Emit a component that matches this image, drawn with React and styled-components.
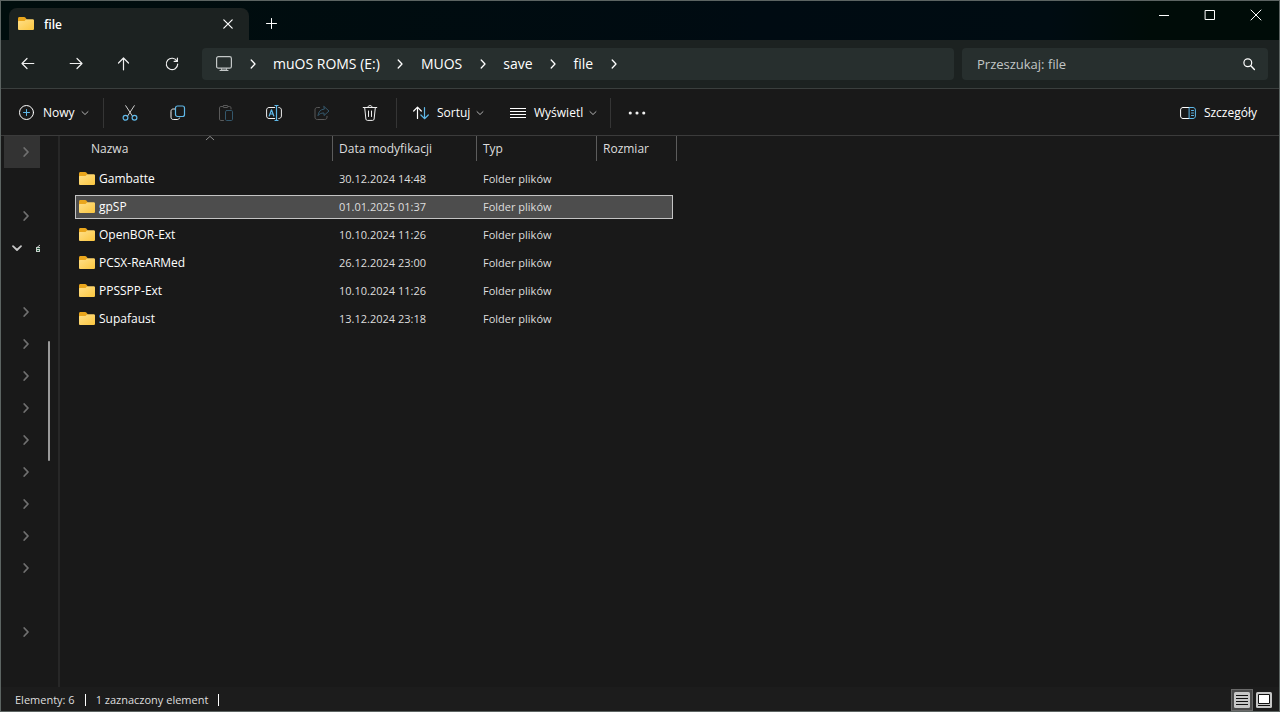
import { useState } from "react";
import styled, { createGlobalStyle } from "styled-components";

const folders = [
    { name: "Gambatte", date: "30.12.2024 14:48" },
    { name: "gpSP", date: "01.01.2025 01:37" },
    { name: "OpenBOR-Ext", date: "10.10.2024 11:26" },
    { name: "PCSX-ReARMed", date: "26.12.2024 23:00" },
    { name: "PPSSPP-Ext", date: "10.10.2024 11:26" },
    { name: "Supafaust", date: "13.12.2024 23:18" },
];

const path = ["muOS ROMS (E:)", "MUOS", "save", "file"];

// one entry for each line of the navigation tree
const tree = [
    "selected", "empty", "closed", "open", "empty",
    "closed", "closed", "closed", "closed", "closed", "closed", "closed", "closed", "closed",
    "empty", "closed",
];

const BLUE = "#5fb8e8";

function Icon({ size = 16, children, ...rest }) {
    return (
        <svg width={size} height={size} viewBox="0 0 16 16" fill="none" stroke="currentColor"
            strokeLinecap="round" strokeLinejoin="round" aria-hidden="true" {...rest}>
            {children}
        </svg>
    );
}

function FolderIcon() {
    return (
        <Icon stroke="none">
            <path d="M0 2.6C0 1.700.6 1 1.400 1h4.800c.4 0 .8.2 1.100.5L8.500 3v5H0z" fill="#eaa61c" />
            <path d="M0 6c0-.7.4-1 1-1h4.900c.5 0 .8-.1 1.100-.5l1-.9c.3-.3.6-.4 1-.4h5.700c.8 0 1.300.6 1.300 1.300v8.200c0 .8-.6 1.300-1.300 1.300H1.300c-.8 0-1.300-.5-1.300-1.300z" fill="url(#folder)" />
            <defs>
                <linearGradient id="folder" x1="0" y1="0" x2="1" y2="1">
                    <stop offset="0" stopColor="#ffe08a" />
                    <stop offset="1" stopColor="#fbc63f" />
                </linearGradient>
            </defs>
        </Icon>
    );
}

function Chevron({ down, size = 16, width = 1.3 }) {
    return (
        <Icon size={size} strokeWidth={width}>
            <path d={down ? "M4 6.2 8 10l4-3.8" : "M6.2 4 10 8l-3.8 4"} />
        </Icon>
    );
}

export default function App() {
    const [selected, setSelected] = useState("gpSP");

    return (
        <>
            <GlobalStyle />
            <Window>
                <TitleBar>
                    <Tab>
                        <FolderIcon />
                        <TabName>file</TabName>
                        <TabClose aria-label="Zamknij kartę">
                            <Icon strokeWidth="1.2"><path d="m3.8 3.8 8.4 8.4m0-8.4-8.4 8.4" /></Icon>
                        </TabClose>
                    </Tab>
                    <NewTab aria-label="Nowa karta">
                        <Icon><path d="M7.5 2.5v10M2.5 7.5h10" /></Icon>
                    </NewTab>
                    <WindowControls>
                        <WindowButton aria-label="Minimalizuj">
                            <Icon><path d="M3 8.5h10" strokeLinecap="butt" /></Icon>
                        </WindowButton>
                        <WindowButton aria-label="Maksymalizuj">
                            <Icon><rect x="3.5" y="3.5" width="9" height="9" /></Icon>
                        </WindowButton>
                        <WindowButton aria-label="Zamknij">
                            <Icon><path d="m3 3 10 10m0-10L3 13" /></Icon>
                        </WindowButton>
                    </WindowControls>
                </TitleBar>

                <AddressBar>
                    <NavButtons>
                        <IconButton aria-label="Wstecz">
                            <Icon strokeWidth="1.2"><path d="M13.800 7.500H2.300M7 2.500l-5 5 5 5" /></Icon>
                        </IconButton>
                        <IconButton aria-label="Dalej">
                            <Icon strokeWidth="1.2"><path d="M2.200 7.500h11.500M9 2.500l5 5-5 5" /></Icon>
                        </IconButton>
                        <IconButton aria-label="W górę">
                            <Icon strokeWidth="1.2"><path d="M7.500 13.800V2.300M2.500 7l5-5 5 5" /></Icon>
                        </IconButton>
                        <IconButton aria-label="Odśwież">
                            <Icon strokeWidth="1.2"><path d="M13 5.200A5.700 5.700 0 1 0 13.700 8M13.400 2.200v3.200h-3.200" /></Icon>
                        </IconButton>
                    </NavButtons>
                    <Breadcrumbs aria-label="Ścieżka">
                        <Icon color="#c4c8c8">
                            <rect x=".6" y=".6" width="14.8" height="11.6" rx="1.8" strokeWidth="1.2" />
                            <path d="M5.5 12.5v2M10.5 12.5v2M4 14.500h8" strokeWidth="1.200" />
                            <path d="M6 13.300h4" stroke="#8b9090" />
                        </Icon>
                        <CrumbArrow><Chevron /></CrumbArrow>
                        {path.map(name => (
                            <Crumb key={name}>
                                <CrumbLink href="#">{name}</CrumbLink>
                                <CrumbArrow><Chevron /></CrumbArrow>
                            </Crumb>
                        ))}
                    </Breadcrumbs>
                    <Search>
                        <SearchInput type="text" aria-label="Przeszukaj: file" placeholder="Przeszukaj: file" />
                        <Icon>
                            <circle cx="6.8" cy="6.8" r="3.9" strokeWidth="1.2" />
                            <path d="m9.8 9.8 3.6 3.6" strokeWidth="1.4" />
                        </Icon>
                    </Search>
                </AddressBar>

                <Toolbar>
                    <MenuButton $left={18} $width={100}>
                        <Icon>
                            <circle cx="7.500" cy="7.500" r="7" />
                            <path d="M7.500 4.500v6M4.500 7.500h6" stroke={BLUE} />
                        </Icon>
                        Nowy
                        <Chevron down size={12} />
                    </MenuButton>
                    <Separator />
                    <IconButton aria-label="Wytnij">
                        <Icon>
                            <path d="m3.7.7 6.8 10.500M12.300.7 5.500 11.200" stroke="#d0d0d0" />
                            <circle cx="3.5" cy="12.8" r="2.4" stroke={BLUE} strokeWidth="1.200" />
                            <circle cx="12.5" cy="12.8" r="2.4" stroke={BLUE} strokeWidth="1.200" />
                        </Icon>
                    </IconButton>
                    <IconButton aria-label="Kopiuj">
                        <Icon>
                            <path d="M4.600 4H3.300C1.900 4 1 4.900 1 6.300v5.900c0 1.400.9 2.300 2.300 2.300h3.900c1.200 0 2-.6 2.300-1.500" />
                            <rect x="5.500" y="1" width="9" height="10.500" rx="2" stroke={BLUE} strokeWidth="1.200" />
                        </Icon>
                    </IconButton>
                    <IconButton aria-label="Wklej" disabled>
                        <Icon>
                            <path d="M5 1.500H2.800c-.8 0-1.300.5-1.300 1.300v11.400c0 .8.5 1.300 1.300 1.300h2.700M10 1.500h1.700c.8 0 1.300.5 1.300 1.300V4" />
                            <rect x="5" y=".5" width="5" height="2" rx="1" />
                            <rect x="7.500" y="5.500" width="7" height="10" rx="1.200" stroke="#34576b" />
                        </Icon>
                    </IconButton>
                    <IconButton aria-label="Zmień nazwę">
                        <Icon>
                            <path d="M8.700 2.500H3C1.700 2.500.6 3.500.6 4.900v6.200c0 1.400 1.100 2.400 2.400 2.400h5.700M12.800 2.500c1.600 0 2.600 1 2.600 2.400v6.200c0 1.400-1 2.400-2.600 2.400" />
                            <path d="m3.200 11 2.300-6.200L7.800 11M4 9h3M9 .5h3M9 15.500h3M10.500.6v14.800" stroke={BLUE} strokeWidth="1.200" />
                        </Icon>
                    </IconButton>
                    <IconButton aria-label="Udostępnij" disabled>
                        <Icon>
                            <path d="M5.500 2.500H3.300C1.900 2.500 1 3.400 1 4.800v7.400c0 1.400.9 2.300 2.300 2.300h7.400c1.400 0 2.300-.9 2.300-2.300v-.9" />
                            <path d="M10 1.500 15 6l-5 4.500V8c-3 0-4.700.8-6 2.700C4.300 7 6.300 4.400 10 4.100z" stroke="#34576b" />
                        </Icon>
                    </IconButton>
                    <IconButton aria-label="Usuń">
                        <Icon>
                            <path d="M1.200 2.500h13.600M5.800 2.500C5.800 1.300 6.700.6 8 .6s2.200.7 2.200 1.900M2.700 2.800l1.200 11.300c.1.800.7 1.300 1.500 1.300h5.200c.8 0 1.400-.5 1.500-1.300l1.200-11.300M6.500 6v5.500M9.500 6v5.500" />
                        </Icon>
                    </IconButton>
                    <Separator />
                    <MenuButton $left={14} $width={94}>
                        <Icon strokeWidth="1.200">
                            <path d="M4.500 13.500v-11M.7 6l3.800-3.800L8.300 6" />
                            <path d="M11.500 2.500v11M7.900 10l3.600 3.700 3.800-3.700" stroke={BLUE} />
                        </Icon>
                        Sortuj
                        <Chevron down size={12} />
                    </MenuButton>
                    <MenuButton $left={17} $width={115}>
                        <Icon strokeLinecap="butt"><path d="M0 3.500h16M0 6.500h16M0 9.500h16M0 12.500h16" /></Icon>
                        Wyświetl
                        <Chevron down size={12} />
                    </MenuButton>
                    <Separator />
                    <IconButton aria-label="Więcej">
                        <Icon size={18} stroke="none" fill="currentColor">
                            <circle cx="2" cy="8" r="1.400" />
                            <circle cx="8" cy="8" r="1.400" />
                            <circle cx="14" cy="8" r="1.400" />
                        </Icon>
                    </IconButton>
                    <DetailsButton>
                        <Icon>
                            <path d="M9.500 2.500H3C1.600 2.500.6 3.500.6 4.900v6.200c0 1.400 1 2.400 2.400 2.400h6.500" />
                            <path d="M9.500 2.500H13c1.400 0 2.400 1 2.400 2.400v6.200c0 1.400-1 2.400-2.400 2.400H9.500zM11.500 5.500h2M11.500 8h2M11.500 10.500h2" stroke={BLUE} />
                        </Icon>
                        Szczegóły
                    </DetailsButton>
                </Toolbar>

                <Content>
                    <TreePane>
                        {tree.map((state, i) => (
                            <TreeItem key={i} $selected={state === "selected"}>
                                {state !== "empty" && (
                                    <TreeToggle aria-label="Rozwiń" $open={state === "open"}>
                                        <Chevron down={state === "open"} width={1.8} />
                                    </TreeToggle>
                                )}
                                {state === "open" && (
                                    <svg width="4" height="8" viewBox="0 0 4 8" aria-hidden="true">
                                        <path d="M1 3.500 4 1" stroke="#d0d0d0" />
                                        <path d="M0 3h4v5H0z" fill="#c8d0cb" />
                                        <path d="M1 4h3v1H1zM1 6h2v1H1z" fill="#24563c" />
                                    </svg>
                                )}
                            </TreeItem>
                        ))}
                        <TreeScroll />
                    </TreePane>
                    <FileTable>
                        <thead>
                            <HeaderRow>
                                <HeaderCell $first>
                                    Nazwa
                                    <SortMark><Icon size={12}><path d="m3 9 5-4.500L13 9" /></Icon></SortMark>
                                </HeaderCell>
                                <HeaderCell>Data modyfikacji</HeaderCell>
                                <HeaderCell>Typ</HeaderCell>
                                <HeaderCell>Rozmiar</HeaderCell>
                            </HeaderRow>
                        </thead>
                        <tbody>
                            {folders.map(folder => (
                                <FileRow
                                    key={folder.name}
                                    $selected={folder.name === selected}
                                    onClick={() => setSelected(folder.name)}
                                >
                                    <NameCell><FolderIcon />{folder.name}</NameCell>
                                    <FileCell>{folder.date}</FileCell>
                                    <FileCell>Folder plików</FileCell>
                                    <FileCell />
                                </FileRow>
                            ))}
                        </tbody>
                    </FileTable>
                </Content>

                <StatusBar>
                    <StatusText>Elementy: 6</StatusText>
                    <StatusText>1 zaznaczony element</StatusText>
                    <ViewButtons>
                        <ViewButton $active aria-label="Szczegóły">
                            <Icon strokeLinecap="butt">
                                <rect width="16" height="16" rx="1.500" fill="#c6c6c6" stroke="none" />
                                <path d="M2 3.500h12M2 6.500h12M2 9.500h12M2 12.500h12" stroke="#111" />
                            </Icon>
                        </ViewButton>
                        <ViewButton aria-label="Duże ikony">
                            <Icon strokeLinecap="butt">
                                <rect width="16" height="16" rx="1.500" fill="#c6c6c6" stroke="none" />
                                <rect x="2.500" y="2.500" width="11" height="9" fill="#fff" stroke="#111" />
                                <path d="M2 13.500h12" stroke="#111" />
                            </Icon>
                        </ViewButton>
                    </ViewButtons>
                </StatusBar>
            </Window>
        </>
    );
}

const GlobalStyle = createGlobalStyle`
    * {
        box-sizing: border-box;
    }
    body {
        margin: 0;
        background: #191919;
        color: #ffffff;
        font-family: "Open Sans", sans-serif;
        font-size: 12px;
        line-height: 16px;
    }
    button {
        display: flex;
        align-items: center;
        justify-content: center;
        padding: 0;
        border: 0;
        background: none;
        color: inherit;
        font: inherit;
    }
    svg {
        display: block;
        flex-shrink: 0;
    }
`;

const Window = styled.div`
    min-height: 100vh;
    display: flex;
    flex-direction: column;
    border: 1px solid #5c6462;
`;

const TitleBar = styled.header`
    display: flex;
    height: 39px;
    padding-left: 8px;
    background: linear-gradient(90deg, #000d0d, #000b12 60%, #000c12 82%, #000c08 90%);
`;

const Tab = styled.div`
    display: flex;
    align-items: center;
    align-self: flex-end;
    width: 240px;
    height: 32px;
    padding: 0 13px 0 9px;
    border-radius: 8px 8px 0 0;
    background: #1c2221;
`;

const TabName = styled.span`
    flex: 1;
    margin-left: 10px;
    padding-top: 2px;
    font-weight: 600;
`;

const TabClose = styled.button`
    width: 16px;
    height: 24px;
`;

const NewTab = styled.button`
    width: 46px;
    height: 32px;
    align-self: flex-end;
`;

const WindowControls = styled.div`
    display: flex;
    margin-left: auto;
`;

const WindowButton = styled.button`
    width: 46px;
    height: 28px;
`;

const AddressBar = styled.div`
    display: flex;
    align-items: center;
    height: 49px;
    padding: 0 11px 0 3px;
    border-bottom: 1px solid #3a3f3e;
    background: #1c2221;
`;

const NavButtons = styled.div`
    display: flex;
`;

const IconButton = styled.button`
    width: 48px;
    height: 32px;
    color: ${props => props.disabled ? "#5a5a5a" : "#f0f0f0"};
`;

const Breadcrumbs = styled.nav`
    display: flex;
    align-items: center;
    flex: 1;
    height: 32px;
    margin: 0 8px 0 6px;
    padding-left: 14px;
    border-radius: 4px;
    background: #272f2e;
    font-size: 14px;
    line-height: 20px;
`;

const Crumb = styled.span`
    display: flex;
    align-items: center;
`;

const CrumbLink = styled.a`
    color: inherit;
    text-decoration: none;
`;

const CrumbArrow = styled.span`
    display: flex;
    justify-content: center;
    width: 41px;
`;

const Search = styled.div`
    display: flex;
    align-items: center;
    width: 306px;
    height: 32px;
    padding: 0 11px 0 15px;
    border-radius: 4px;
    background: #272f2e;
`;

const SearchInput = styled.input`
    flex: 1;
    min-width: 0;
    padding: 0;
    border: 0;
    outline: 0;
    background: none;
    color: #ffffff;
    font: inherit;
    font-size: 13px;
    line-height: 20px;
    &::placeholder {
        color: #c2c6c6;
        opacity: 1;
    }
`;

const Toolbar = styled.div`
    display: flex;
    align-items: center;
    height: 47px;
    padding-top: 2px;
    border-bottom: 1px solid #3b3b3b;
`;

const Separator = styled.span`
    width: 1px;
    height: 30px;
    margin: 0 2px;
    background: #353535;
`;

const MenuButton = styled.button`
    justify-content: flex-start;
    gap: 8px;
    width: ${props => props.$width}px;
    height: 32px;
    padding-left: ${props => props.$left}px;

    svg:last-child {
        margin-left: -4px;
        color: #b4b4b4;
    }
`;

const DetailsButton = styled.button`
    gap: 8px;
    height: 32px;
    margin-left: auto;
    padding-right: 22px;
`;

const Content = styled.main`
    display: flex;
    flex: 1;
`;

const TreePane = styled.aside`
    position: relative;
    width: 59px;
    padding-left: 3px;
    border-right: 2px solid #272727;
`;

const TreeItem = styled.div`
    display: flex;
    align-items: center;
    justify-content: flex-end;
    width: 36px;
    height: 32px;
    background: ${props => props.$selected ? "#333333" : "transparent"};
`;

const TreeToggle = styled.button`
    width: 16px;
    height: 32px;
    margin-right: ${props => props.$open ? 11 : 6}px;
    color: ${props => props.$open ? "#c8c8c8" : "#707070"};
`;

const TreeScroll = styled.div`
    position: absolute;
    top: 205px;
    right: 8px;
    width: 2px;
    height: 120px;
    border-radius: 1px;
    background: #9a9a9a;
`;

const FileTable = styled.table`
    display: block;
    margin-left: 15px;
    border-spacing: 0;

    thead, tbody {
        display: block;
    }
`;

const HeaderRow = styled.tr`
    display: grid;
    grid-template-columns: 258px 144px 120px 80px;
    height: 25px;
    margin-bottom: 6px;
`;

const HeaderCell = styled.th`
    position: relative;
    padding: 5px 0 0 ${props => props.$first ? 16 : 6}px;
    border-right: 1px solid #5c5c5c;
    color: #dedede;
    font-weight: 400;
    text-align: left;
`;

const SortMark = styled.span`
    position: absolute;
    top: -3px;
    left: 50%;
    color: #b0b0b0;
`;

const FileRow = styled.tr`
    display: grid;
    grid-template-columns: 258px 144px 120px 76px;
    align-items: center;
    height: 24px;
    margin: 0 4px 4px 0;
    outline: ${props => props.$selected ? "1px solid #c4c4c4" : "none"};
    outline-offset: -1px;
    background: ${props => props.$selected ? "#4d4d4d" : "transparent"};
`;

const NameCell = styled.td`
    display: flex;
    align-items: center;
    gap: 4px;
    padding: 0 0 0 4px;
`;

const FileCell = styled.td`
    padding: 0 0 0 6px;
    color: #dedede;
    font-size: 11px;
`;

const StatusBar = styled.footer`
    display: flex;
    align-items: center;
    height: 24px;
    padding: 2px 4px 0 14px;
    background: #1c1c1c;
    color: #dedede;
    font-size: 11px;
`;

const StatusText = styled.span`
    display: flex;
    align-items: center;
    margin-right: 10px;

    &::after {
        content: "";
        width: 1px;
        height: 12px;
        margin-left: 10px;
        background: #ffffff;
    }
`;

const ViewButtons = styled.div`
    display: flex;
    margin-left: auto;
`;

const ViewButton = styled.button`
    width: 22px;
    height: 22px;
    border: 1px solid ${props => props.$active ? "#6a6a6a" : "transparent"};
    background: ${props => props.$active ? "#4a4a4a" : "none"};
`;
